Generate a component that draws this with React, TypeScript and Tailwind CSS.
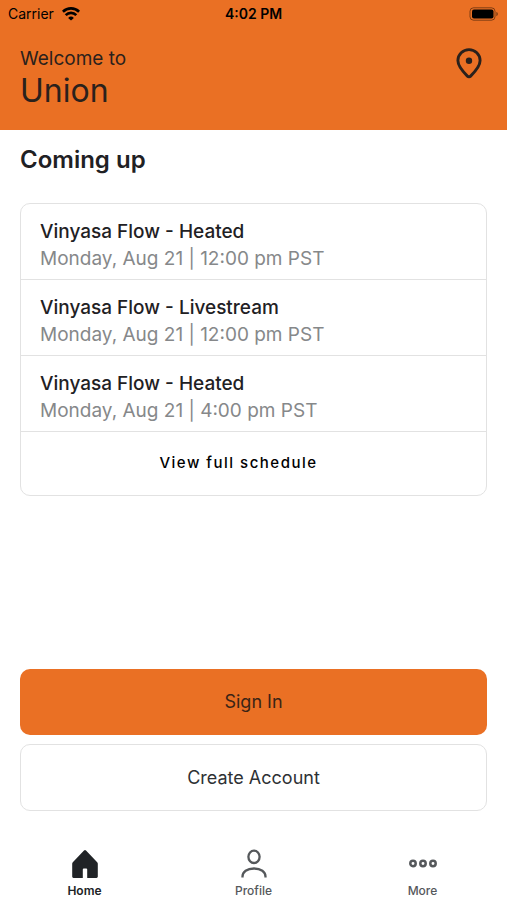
import type { ReactNode } from "react";

const classes = [
  { id: 1, name: "Vinyasa Flow - Heated", time: "Monday, Aug 21 | 12:00 pm PST" },
  { id: 2, name: "Vinyasa Flow - Livestream", time: "Monday, Aug 21 | 12:00 pm PST" },
  { id: 3, name: "Vinyasa Flow - Heated", time: "Monday, Aug 21 | 4:00 pm PST" },
];

const WifiIcon = () => (
  <svg viewBox="0 0 18 14" className="h-[14px] w-[18px]" fill="none" stroke="currentColor" strokeWidth="2.7" aria-hidden="true">
    <path d="M.9 4.7a11.6 11.6 0 0 1 16.2 0" />
    <path d="M3.7 8.1a7.5 7.5 0 0 1 10.6 0" />
    <path d="M9 13.6 6.1 10.9a4.1 4.1 0 0 1 5.8 0z" fill="currentColor" stroke="none" />
  </svg>
);

const BatteryIcon = () => (
  <svg viewBox="0 0 31 14" className="h-[14px] w-[31px]" fill="none" aria-hidden="true">
    <rect x="2" y="0.8" width="25" height="12.4" rx="3.5" stroke="#000" strokeOpacity="0.45" />
    <rect x="4" y="2.5" width="21.5" height="9" rx="2" fill="#000" />
    <path d="M28.3 5v4.2c1-.4 1.6-1.2 1.6-2.1s-.6-1.7-1.6-2.1z" fill="#000" fillOpacity="0.45" />
  </svg>
);

const PinIcon = () => (
  <svg viewBox="0 0 26 32" className="h-8 w-[26px]" fill="none" aria-hidden="true">
    <path
      d="M13 2.6C7 2.6 1.9 7.2 1.9 13.6c0 6.1 5.5 11.6 9.5 15.5.9.9 2.3.9 3.2 0 4-3.9 9.500-9.400 9.500-15.500C24.100 7.200 19 2.600 13 2.600z"
      stroke="currentColor"
      strokeWidth="2.9"
    />
    <circle cx="13" cy="13.7" r="3.2" fill="currentColor" />
  </svg>
);

const HomeIcon = () => (
  <svg viewBox="0 0 28 30" className="h-[30px] w-7" fill="currentColor" aria-hidden="true">
    <path d="M13 1.4a1.4 1.4 0 0 1 2 0L26.200 13.200c.4.5.6 1 .6 1.600v12.800c0 .8-.6 1.300-1.300 1.300h-9.300v-8.300a1 1 0 0 0-1-1h-2.400a1 1 0 0 0-1 1v8.300H2.500c-.7 0-1.300-.5-1.300-1.300V14.800c0-.6.2-1.100.6-1.600z" />
  </svg>
);

const ProfileIcon = () => (
  <svg viewBox="0 0 28 30" className="h-[30px] w-7" fill="none" stroke="currentColor" strokeWidth="2.3" aria-hidden="true">
    <ellipse cx="14" cy="7.8" rx="5.600" ry="6.200" />
    <path d="M2.5 28.5v-.9c0-4.700 4.500-8.100 11.500-8.100s11.500 3.400 11.500 8.100v.9" />
  </svg>
);

const MoreIcon = () => (
  <svg viewBox="0 0 28 30" className="h-[30px] w-7" fill="none" stroke="currentColor" strokeWidth="2.5" aria-hidden="true">
    <circle cx="4" cy="14.5" r="2.7" />
    <circle cx="14" cy="14.5" r="2.7" />
    <circle cx="24" cy="14.5" r="2.7" />
  </svg>
);

type TabProps = {
  label: string;
  icon: ReactNode;
  active?: boolean;
};

const Tab = ({ label, icon, active = false }: TabProps) => (
  <a
    href="#"
    aria-current={active ? "page" : undefined}
    className={`flex flex-1 flex-col items-center gap-1 text-xs leading-4 ${
      active ? "font-semibold text-[#202326]" : "font-medium text-[#55585b]"
    }`}
  >
    {icon}
    {label}
  </a>
);

const App = () => {
  return (
    <div className="flex min-h-screen flex-col bg-white font-['Inter',sans-serif] text-[#1f2124]">
      <header className="bg-[#ea7024] pb-[19px]">
        {/* Status bar */}
        <div className="grid grid-cols-3 items-center px-2 pt-1 text-sm leading-5 text-black">
          <div className="flex items-center gap-2">
            Carrier
            <WifiIcon />
          </div>
          <div className="text-center font-semibold">4:02 PM</div>
          <div className="flex justify-end">
            <BatteryIcon />
          </div>
        </div>

        <div className="flex items-start justify-between px-5 pt-[23px] text-[#2a211c]">
          <h1>
            <span className="block text-[19px] leading-6">Welcome to</span>
            <span className="block text-[32px] leading-10">Union</span>
          </h1>
          <button type="button" aria-label="Choose location" className="mr-[5px]">
            <PinIcon />
          </button>
        </div>
      </header>

      <main className="flex flex-1 flex-col px-5">
        <h2 className="pt-4 text-2xl leading-7 font-semibold">Coming up</h2>

        <div className="mt-[29px] rounded-[10px] border border-[#e2e2e2]">
          <ul>
            {classes.map((item) => (
              <li key={item.id} className="border-b border-[#e2e2e2] px-[19px] pt-[14px] pb-[7px]">
                <p className="text-[19px] leading-7 font-medium">{item.name}</p>
                <p className="text-[19px] leading-[26px] text-[#86888a]">{item.time}</p>
              </li>
            ))}
          </ul>
          <button type="button" className="h-[63px] w-full pr-[30px] text-[15px] font-medium tracking-widest text-black">
            View full schedule
          </button>
        </div>

        <div className="mt-auto flex flex-col gap-[9px]">
          <button type="button" className="h-[66px] rounded-[10px] bg-[#ea7024] text-lg text-[#3a2416]">
            Sign In
          </button>
          <button type="button" className="h-[67px] rounded-[10px] border border-[#e2e2e2] text-lg text-[#2e3134]">
            Create Account
          </button>
        </div>
      </main>

      <nav className="flex pt-[38px] pb-px">
        <Tab label="Home" icon={<HomeIcon />} active />
        <Tab label="Profile" icon={<ProfileIcon />} />
        <Tab label="More" icon={<MoreIcon />} />
      </nav>
    </div>
  );
};

export default App;
